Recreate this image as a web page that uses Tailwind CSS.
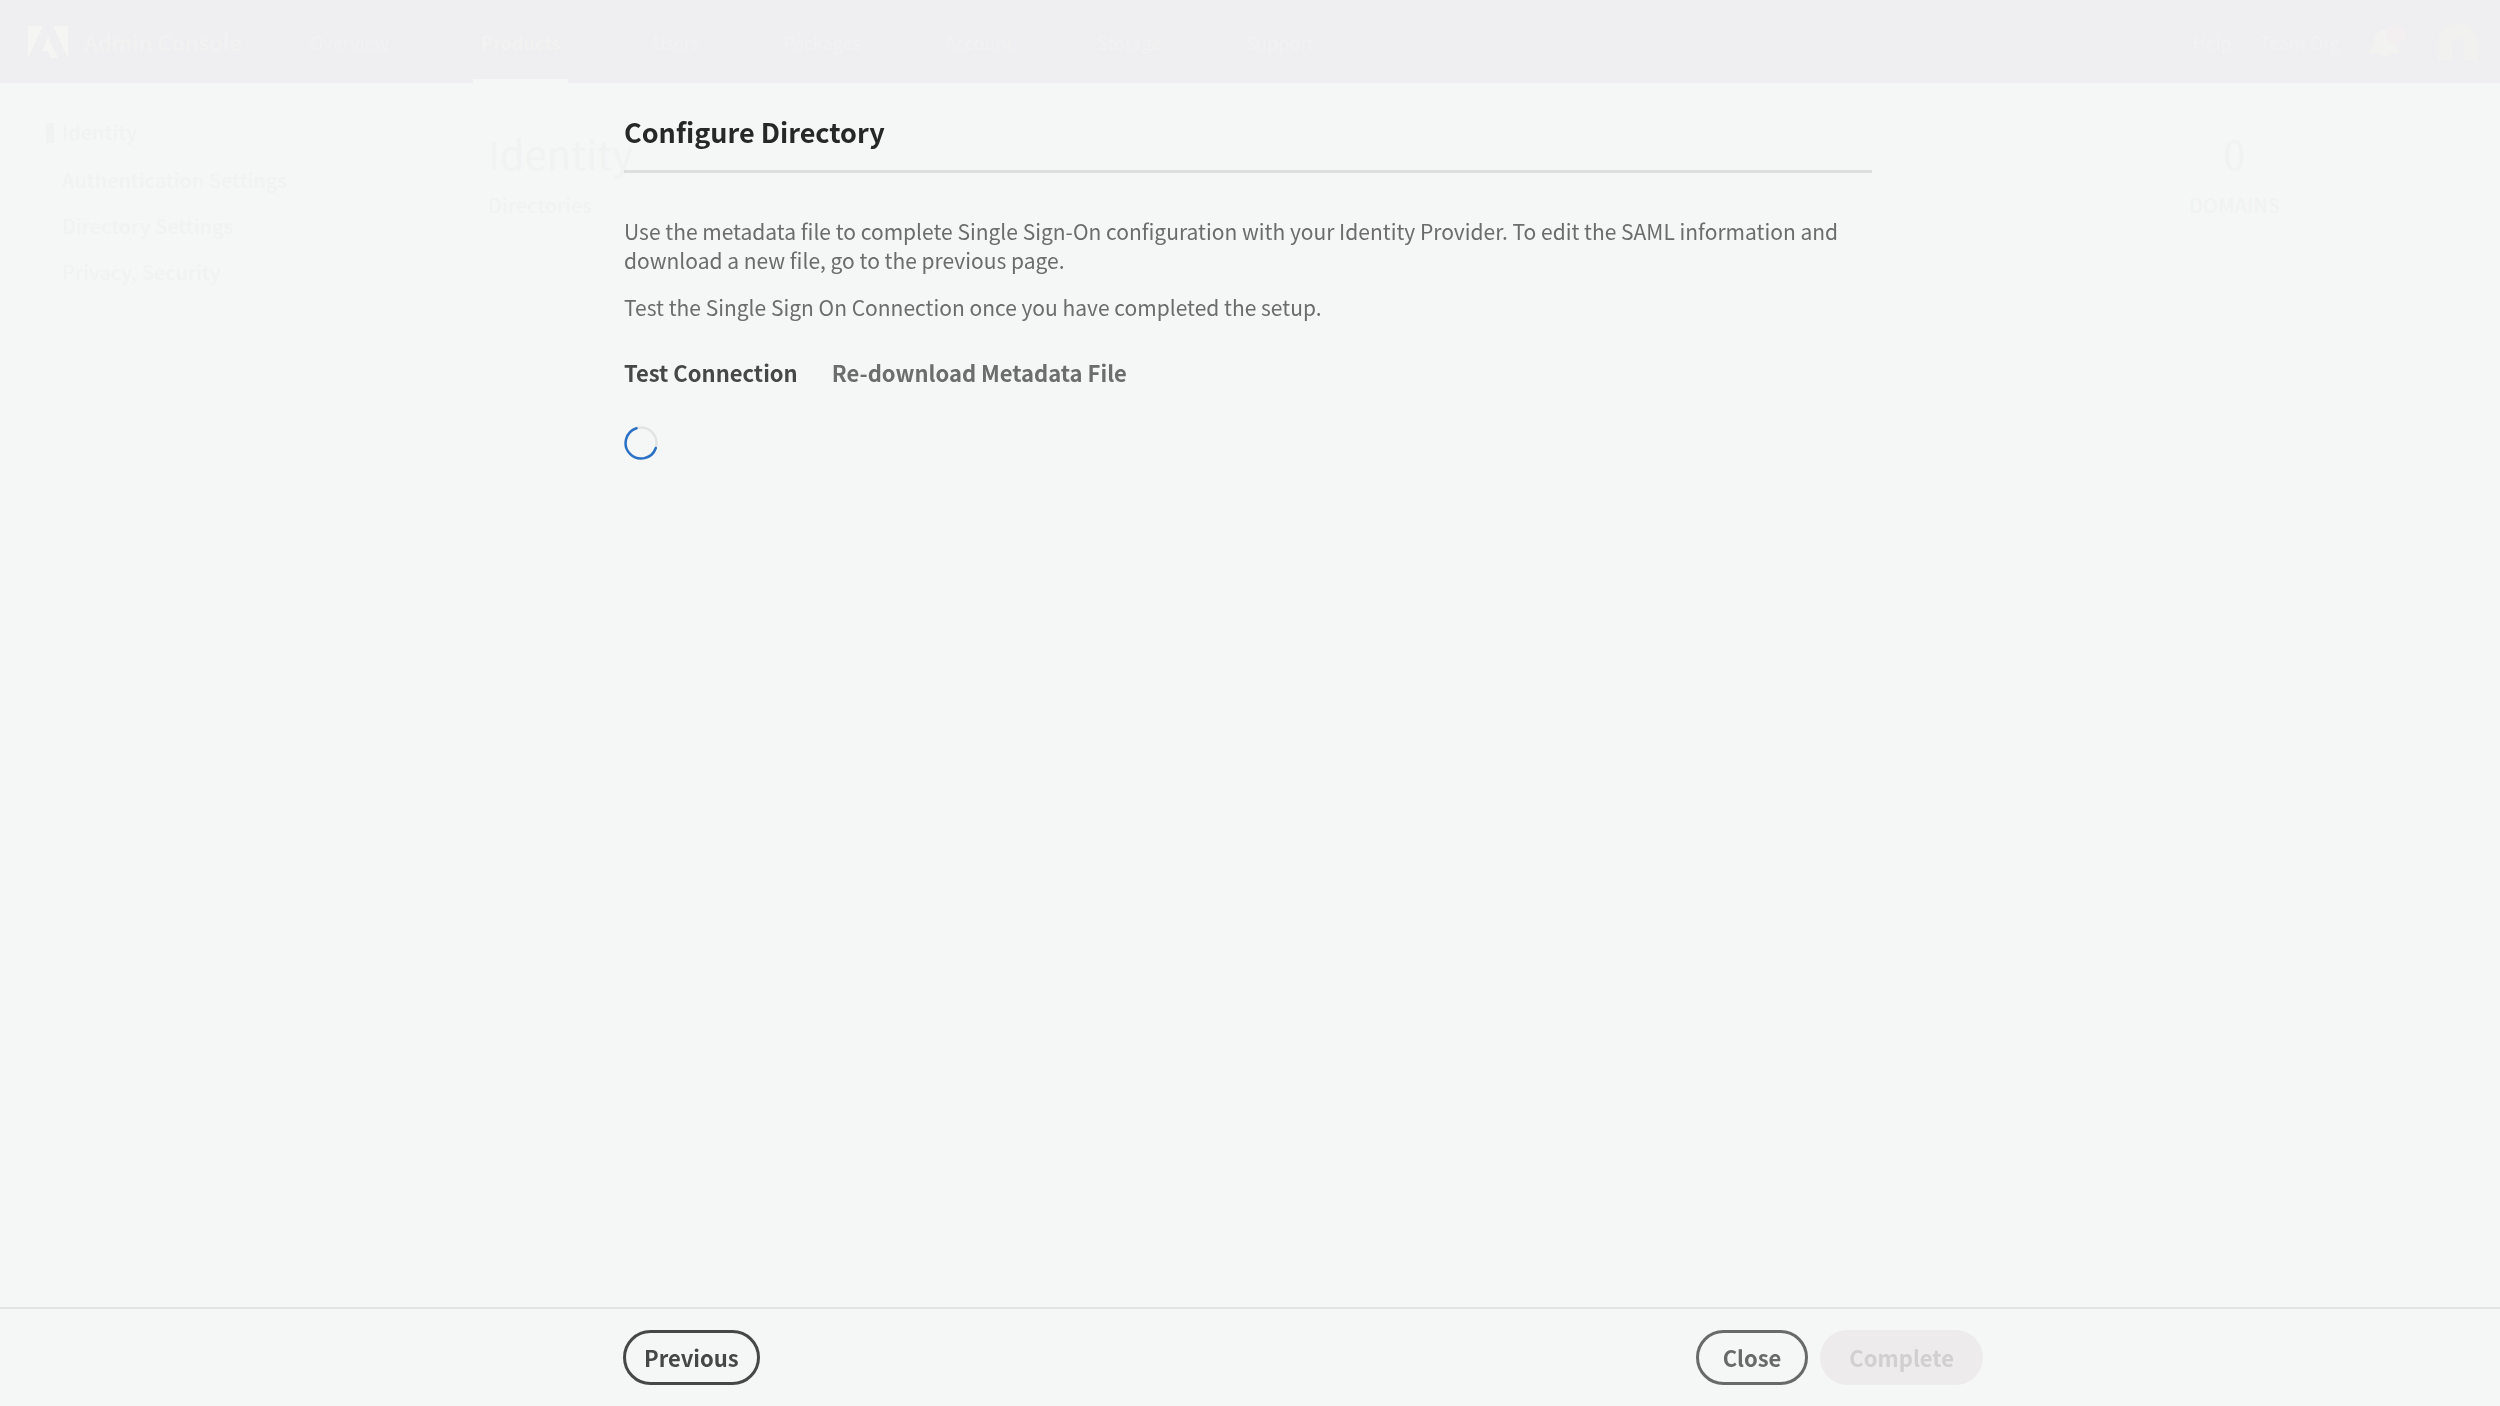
<!DOCTYPE html>
<html lang="en">
<head>
    <meta charset="UTF-8">
    <meta name="viewport" content="width=device-width, initial-scale=1.0">
    <title>Configure Directory</title>
    <script src="https://cdn.jsdelivr.net/npm/@tailwindcss/browser@4"></script>
</head>
<body class="min-h-screen bg-[#f5f7f6] font-['Noto_Sans_CJK_SC','Noto_Sans',sans-serif]">

    <!-- Admin console behind the dialog -->
    <div class="text-[#f1f2f2]" aria-hidden="true">
        <header class="flex h-[83px] items-center bg-[#efeff1] pl-7 pr-5 text-lg text-[#f2f2f1]">
            <svg class="h-8 w-10 text-[#f5f6f4]" viewBox="0 0 40 32" fill="currentColor">
                <path d="M0 0h15L0 32zM25 0h15v32zM20 11l10 21h-7l-3-7h-6z"/>
            </svg>
            <span class="ml-4 w-[226px] text-[22px] font-medium">Admin Console</span>
            <nav class="flex h-full items-center gap-[84px]">
                <a href="#">Overview</a>
                <a href="#" class="flex h-full items-center border-b-4 border-[#f5f7f6] px-2 pt-1 font-bold">Products</a>
                <a href="#">Users</a>
                <a href="#">Packages</a>
                <a href="#">Account</a>
                <a href="#">Storage</a>
                <a href="#">Support</a>
            </nav>
            <div class="ml-auto flex items-center gap-7">
                <span>Help</span>
                <span>Team Org</span>
                <svg class="h-10 w-10" viewBox="0 0 40 40" fill="none">
                    <path d="M3 30c6-4 2-20 14-21 12 1 8 17 13 21zM13 33h8" fill="#f2f2f0" stroke="#f2f2f0" stroke-width="3"/>
                    <circle cx="28" cy="13" r="10" fill="#f3eff1"/>
                </svg>
                <svg class="h-10 w-11" viewBox="0 0 44 40" fill="none">
                    <path d="M2 38V20a20 18 0 0 1 40 0v18H28V22a6 6 0 1 0-12 0v16z" fill="#f1f1ef"/>
                </svg>
            </div>
        </header>
        <div class="flex">
            <aside class="w-[488px] pl-[62px] pt-8 text-xl font-medium">
                <a href="#" class="relative block leading-[34px]">
                    <span class="absolute -left-4 top-2 h-5 w-2 bg-[#f1f2f2]"></span>Identity
                </a>
                <ul class="pt-2 leading-[46px]">
                    <li><a href="#">Authentication Settings</a></li>
                    <li><a href="#">Directory Settings</a></li>
                    <li><a href="#">Privacy, Security</a></li>
                </ul>
            </aside>
            <main class="flex flex-1 justify-between pr-[220px] pt-10">
                <div>
                    <h1 class="text-[40px] leading-[60px]">Identity</h1>
                    <p class="pt-1 text-xl font-medium leading-9">Directories</p>
                </div>
                <div class="text-center">
                    <p class="text-[40px] leading-[60px]">0</p>
                    <p class="pt-1 text-xl font-medium leading-9">DOMAINS</p>
                </div>
            </main>
        </div>
    </div>

    <!-- Dialog -->
    <div class="fixed inset-0 flex flex-col" role="dialog" aria-labelledby="dialog-title">
        <section class="flex-1 pr-1">
            <div class="mx-auto w-1/2 pt-[110px]">
                <h2 id="dialog-title" class="border-b-[3px] border-[#dddfde] pb-4 text-[27px] font-bold leading-[44px] text-[#262727]">Configure Directory</h2>
                <div class="pt-11 text-[21px] leading-[29px] text-[#6b6c6c]">
                    <p>Use the metadata file to complete Single Sign-On configuration with your Identity Provider. To edit the SAML information and download a new file, go to the previous page.</p>
                    <p class="pt-[18px]">Test the Single Sign On Connection once you have completed the setup.</p>
                </div>
                <div class="flex gap-[34px] pt-[34px] text-[22px] font-bold leading-8">
                    <button type="button" class="text-[#464747]">Test Connection</button>
                    <button type="button" class="text-[#6c6d6d]">Re-download Metadata File</button>
                </div>
                <svg class="mt-[38px] h-[34px] w-[34px]" viewBox="0 0 34 34" fill="none" stroke-width="2.5" role="img" aria-label="Loading">
                    <circle cx="17" cy="17" r="15.5" stroke="#e3e3e3"/>
                    <path d="M12.5 2.2A15.5 15.5 0 1 0 31.8 22" stroke="#2a72c5" stroke-linecap="round"/>
                </svg>
            </div>
        </section>

        <footer class="border-t-2 border-[#e1e3e2] py-[21px] pl-[623px] pr-[517px] text-[22px] font-bold">
            <div class="flex items-center gap-3">
                <button type="button" class="mr-auto h-[55px] rounded-full border-[3px] border-[#464747] px-[18px] text-[#464747]">Previous</button>
                <button type="button" class="h-[55px] rounded-full border-[3px] border-[#686969] px-6 text-[#686969]">Close</button>
                <button type="button" disabled class="h-[55px] rounded-full bg-[#eeebec] px-[29px] text-[#d0d0d0]">Complete</button>
            </div>
        </footer>
    </div>
</body>
</html>
